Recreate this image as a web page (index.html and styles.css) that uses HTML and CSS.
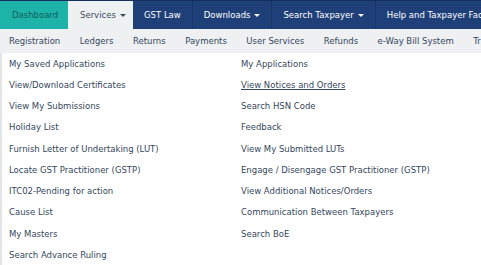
FILE: index.html
```html
<!DOCTYPE html>
<html>
<head>
<meta charset="utf-8">
<link rel="stylesheet" href="styles.css">
</head>
<body>
<nav class="topnav">
  <a class="tn tn-dash">Dashboard</a>
  <a class="tn tn-active">Services <span class="caret"></span></a>
  <a class="tn">GST Law</a>
  <a class="tn">Downloads <span class="caret"></span></a>
  <a class="tn">Search Taxpayer <span class="caret"></span></a>
  <a class="tn">Help and Taxpayer Facilities</a>
</nav>
<nav class="subnav">
  <a class="sn">Registration</a>
  <a class="sn">Ledgers</a>
  <a class="sn">Returns</a>
  <a class="sn">Payments</a>
  <a class="sn">User Services</a>
  <a class="sn">Refunds</a>
  <a class="sn">e-Way Bill System</a>
  <a class="sn">Track Application Status</a>
</nav>
<div class="menu">
  <a class="mi">My Saved Applications</a>
  <a class="mi">My Applications</a>
  <a class="mi">View/Download Certificates</a>
  <a class="mi mi-hover">View Notices and Orders</a>
  <a class="mi">View My Submissions</a>
  <a class="mi">Search HSN Code</a>
  <a class="mi">Holiday List</a>
  <a class="mi">Feedback</a>
  <a class="mi">Furnish Letter of Undertaking (LUT)</a>
  <a class="mi">View My Submitted LUTs</a>
  <a class="mi">Locate GST Practitioner (GSTP)</a>
  <a class="mi">Engage / Disengage GST Practitioner (GSTP)</a>
  <a class="mi">ITC02-Pending for action</a>
  <a class="mi">View Additional Notices/Orders</a>
  <a class="mi">Cause List</a>
  <a class="mi">Communication Between Taxpayers</a>
  <a class="mi">My Masters</a>
  <a class="mi">Search BoE</a>
  <a class="mi">Search Advance Ruling</a>
  <a class="mi"></a>
</div>
</body>
</html>
```
FILE: styles.css
```css
html, body {
  margin: 0;
  padding: 0;
  width: 481px;
  height: 265px;
  overflow: hidden;
  background: #ffffff;
  font-family: "DejaVu Sans", Verdana, sans-serif;
  font-size: 8.5px;
}
a { text-decoration: none; white-space: nowrap; }

.topnav {
  display: flex;
  height: 29px;
  background: #1f3f78;
  border-top: 1px solid #16305e;
  box-sizing: border-box;
}
.tn {
  display: flex;
  align-items: center;
  padding: 0 11px;
  color: #ffffff;
  border-right: 1px solid #193567;
  flex-shrink: 0;
}
.tn-dash {
  width: 68px;
  box-sizing: border-box;
  padding-left: 12px;
  background: #1db3a9;
  color: #0d5f5a;
  border-right: none;
}
.tn-active {
  width: 65px;
  box-sizing: border-box;
  padding-left: 12px;
  background: #eef1f2;
  color: #3b4a5a;
  border-right: none;
}
.caret {
  display: inline-block;
  margin-left: 4px;
  width: 0;
  height: 0;
  border-left: 3px solid transparent;
  border-right: 3px solid transparent;
  border-top: 3px solid currentColor;
  vertical-align: middle;
}

.subnav {
  display: flex;
  height: 24px;
  background: #eef0f2;
  padding-left: 9px;
}
.sn {
  display: flex;
  align-items: center;
  color: #34475c;
  margin-right: 19.5px;
  flex-shrink: 0;
}

.menu {
  display: grid;
  grid-template-columns: 232px 1fr;
  grid-auto-rows: 21.25px;
  padding-left: 7px;
  border-left: 2px solid #e2e4e6;
}
.mi {
  display: flex;
  align-items: center;
  color: #34475c;
}
.mi-hover { text-decoration: underline; }
```
